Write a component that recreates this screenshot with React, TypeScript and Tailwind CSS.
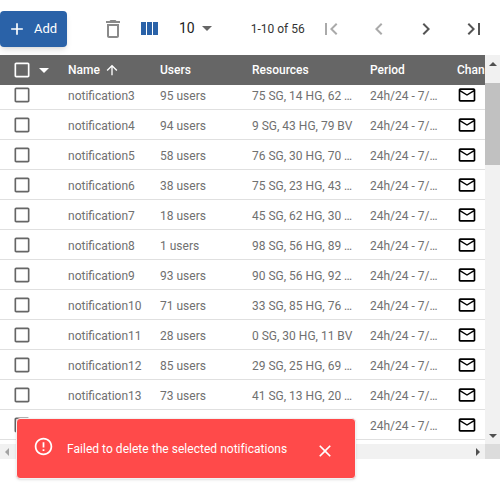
const PATHS = {
  add: "M19 13h-6v6h-2v-6H5v-2h6V5h2v6h6v2z",
  trash: "M6 19c0 1.1.9 2 2 2h8c1.1 0 2-.9 2-2V7H6v12zM8 9h8v10H8V9zm7.5-5l-1-1h-5l-1 1H5v2h14V4h-3.5z",
  columns: "M10 18h5V5h-5v13zm-6 0h5V5H4v13zM16 5v13h5V5h-5z",
  drop: "M7 10l5 5 5-5z",
  first: "M18.41 16.59L13.82 12l4.59-4.59L17 6l-6 6 6 6zM6 6h2v12H6z",
  prev: "M15.41 7.41L14 6l-6 6 6 6 1.41-1.41L10.83 12z",
  next: "M10 6L8.59 7.41 13.17 12l-4.58 4.59L10 18l6-6z",
  last: "M5.59 7.41L10.18 12l-4.59 4.59L7 18l6-6-6-6zM16 6h2v12h-2z",
  check: "M19 5v14H5V5h14m0-2H5c-1.1 0-2 .9-2 2v14c0 1.1.9 2 2 2h14c1.1 0 2-.9 2-2V5c0-1.1-.9-2-2-2z",
  up: "M4 12l1.41 1.41L11 7.83V20h2V7.83l5.58 5.59L20 12l-8-8-8 8z",
  mail: "M22 6c0-1.1-.9-2-2-2H4c-1.1 0-2 .9-2 2v12c0 1.1.9 2 2 2h16c1.1 0 2-.9 2-2V6zm-2 0l-8 5-8-5h16zm0 12H4V8l8 5 8-5v10z",
  error: "M11 15h2v2h-2zm0-8h2v6h-2zm.99-5C6.47 2 2 6.48 2 12s4.47 10 9.99 10C17.52 22 22 17.52 22 12S17.52 2 11.99 2zM12 20c-4.42 0-8-3.58-8-8s3.58-8 8-8 8 3.58 8 8-3.58 8-8 8z",
  close: "M19 6.41L17.59 5 12 10.59 6.41 5 5 6.41 10.59 12 5 17.59 6.41 19 12 13.41 17.59 19 19 17.59 13.41 12z",
};

const Icon = ({ d, className }: { d: string; className: string }) => (
  <svg viewBox="0 0 24 24" fill="currentColor" className={className}>
    <path d={d} />
  </svg>
);

const rows = [
  ["notification3", "95 users", "75 SG, 14 HG, 62 …"],
  ["notification4", "94 users", "9 SG, 43 HG, 79 BV"],
  ["notification5", "58 users", "76 SG, 30 HG, 70 …"],
  ["notification6", "38 users", "75 SG, 23 HG, 43 …"],
  ["notification7", "18 users", "45 SG, 62 HG, 30 …"],
  ["notification8", "1 users", "98 SG, 56 HG, 89 …"],
  ["notification9", "93 users", "90 SG, 56 HG, 92 …"],
  ["notification10", "71 users", "33 SG, 85 HG, 76 …"],
  ["notification11", "28 users", "0 SG, 30 HG, 11 BV"],
  ["notification12", "85 users", "29 SG, 25 HG, 69 …"],
  ["notification13", "73 users", "41 SG, 13 HG, 20 …"],
  ["", "", ""],
];

export default function App() {
  return (
    <div className="relative w-[500px] h-[500px] bg-white overflow-hidden font-['Roboto',sans-serif]">
      {/* TOOLBAR */}
      <div className="h-[55px] pt-[2px] flex items-center">
        <button className="w-[67px] h-9 mt-[1px] pl-[7px] flex items-center gap-[7px] rounded bg-[#2a62a8] text-white text-[13px] shadow-md">
          <Icon d={PATHS.add} className="w-5 h-5" />
          Add
        </button>
        <Icon d={PATHS.trash} className="w-6 h-6 ml-[34px] text-[#8a8a8a]" />
        <Icon d={PATHS.columns} className="w-6 h-6 ml-3 text-[#2a62a8]" />
        <span className="ml-[18px] -mt-[2px] text-sm text-[#222]">10</span>
        <Icon d={PATHS.drop} className="w-6 h-6 -mt-[2px] text-[#666]" />
        <span className="ml-[32px] w-[55px] text-xs text-[#333] whitespace-nowrap">1-10 of 56</span>
        <Icon d={PATHS.first} className="w-6 h-6 ml-[13px] text-[#aaa]" />
        <Icon d={PATHS.prev} className="w-6 h-6 ml-[24px] text-[#aaa]" />
        <Icon d={PATHS.next} className="w-6 h-6 ml-[23px] text-[#555]" />
        <Icon d={PATHS.last} className="w-6 h-6 ml-[24px] text-[#555]" />
      </div>

      <div className="flex h-[404px]">
        <div className="w-[485px] flex flex-col">
          {/* HEADER */}
          <div className="h-[30px] shrink-0 flex items-center overflow-hidden bg-[#666] text-white text-xs font-medium">
            <Icon d={PATHS.check} className="w-5 h-5 ml-3 shrink-0" />
            <Icon d={PATHS.drop} className="w-6 h-6 shrink-0" />
            <div className="w-[92px] ml-3 shrink-0 flex items-center gap-1">
              Name
              <Icon d={PATHS.up} className="w-4 h-4" />
            </div>
            <div className="w-[92px] shrink-0">Users</div>
            <div className="w-[118px] shrink-0">Resources</div>
            <div className="w-[87px] shrink-0">Period</div>
            <div className="whitespace-nowrap">Chan</div>
          </div>
          {/* ROWS */}
          <div className="h-[359px] shrink-0 overflow-hidden">
            <div className="-mt-[5px]">
              {rows.map((r, i) => (
                <div key={i} className="h-[30px] pt-[1px] flex items-center border-b border-[#e0e0e0] text-xs text-[#707070]">
                  <Icon d={PATHS.check} className="w-5 h-5 ml-3 shrink-0 text-[#666]" />
                  <div className="w-[92px] ml-9 mt-[2px] shrink-0">{r[0]}</div>
                  <div className="w-[92px] mt-[2px] shrink-0">{r[1]}</div>
                  <div className="w-[118px] mt-[2px] shrink-0 whitespace-nowrap">{r[2]}</div>
                  <div className="w-[87px] mt-[2px] shrink-0 whitespace-nowrap">24h/24 - 7/…</div>
                  <Icon d={PATHS.mail} className="w-5 h-5 text-black shrink-0" />
                </div>
              ))}
            </div>
          </div>
          {/* HORIZONTAL SCROLLBAR */}
          <div className="h-[15px] shrink-0 flex items-center justify-between bg-[#f1f1f1]">
            <div className="ml-[5px] w-0 h-0 border-y-4 border-y-transparent border-r-4 border-r-[#a3a3a3]" />
            <div className="mr-[5px] w-0 h-0 border-y-4 border-y-transparent border-l-4 border-l-[#505050]" />
          </div>
        </div>
        {/* VERTICAL SCROLLBAR */}
        <div className="w-[15px] flex flex-col bg-[#f1f1f1]">
          <div className="h-[28px] flex justify-center pt-[7px]">
            <div className="w-0 h-0 border-x-4 border-x-transparent border-b-4 border-b-[#505050]" />
          </div>
          <div className="h-[82px] bg-[#c1c1c1]" />
          <div className="flex-1" />
          <div className="h-[15px] bg-[#f1f1f1] flex justify-center pt-[5px]">
            <div className="w-0 h-0 border-x-4 border-x-transparent border-t-4 border-t-[#505050]" />
          </div>
          <div className="h-[15px] bg-[#dcdcdc]" />
        </div>
      </div>

      {/* SNACKBAR */}
      <div className="absolute left-4 top-[418px] w-[340px] h-[61px] flex items-center rounded bg-[#ff4a4a] border border-[#f2f2f2] text-white text-xs tracking-[0.03px] shadow">
        <Icon d={PATHS.error} className="w-[21px] h-[21px] ml-4 -mt-[5px] shrink-0" />
        <span className="ml-[13px] whitespace-nowrap">Failed to delete the selected notifications</span>
        <Icon d={PATHS.close} className="w-5 h-5 ml-7 mt-[5px] shrink-0" />
      </div>
    </div>
  );
}
